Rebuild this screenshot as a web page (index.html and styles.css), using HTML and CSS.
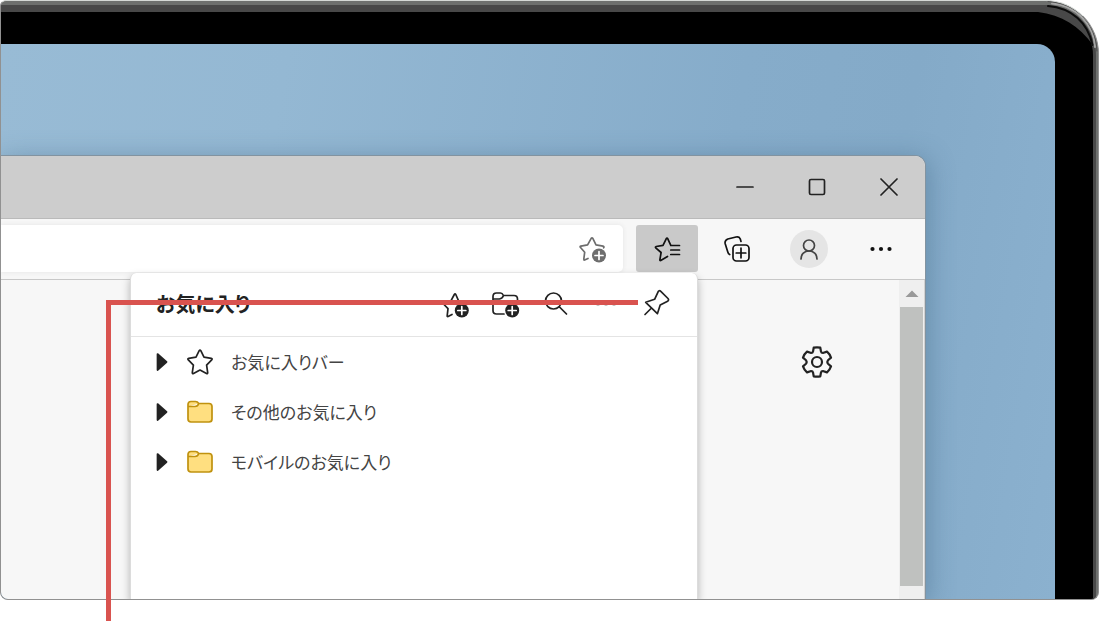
FILE: index.html
```html
<!DOCTYPE html>
<html lang="ja">
<head>
<meta charset="utf-8">
<meta name="viewport" content="width=device-width, initial-scale=1">
<title>お気に入り</title>
<link rel="stylesheet" href="styles.css">
</head>
<body>
<main class="stage">
  <div class="device">
    <div class="bezel">
      <div class="screen">
        <section class="window">
          <header class="titlebar">
            <button class="caption" aria-label="最小化"><svg width="18" height="18" viewBox="0 0 18 18"><path d="M1 9H17"/></svg></button>
            <button class="caption" aria-label="最大化"><svg width="18" height="18" viewBox="0 0 18 18"><rect x="1.500" y="1.500" width="15" height="15" rx="1.500"/></svg></button>
            <button class="caption" aria-label="閉じる"><svg width="18" height="18" viewBox="0 0 18 18"><path d="M1 1L17 17M17 1L1 17"/></svg></button>
          </header>
          <nav class="toolbar">
            <div class="address">
              <input class="url" type="text" aria-label="アドレス">
              <button class="add-page" aria-label="このページをお気に入りに追加">
                <svg width="28" height="28" viewBox="0 0 28 28"><path d="M9 23.500L5.600 25Q4.600 25.300 4.800 24.200L5.700 17.200L1.300 12.300Q.8 11.300 1.900 11.100L8.600 9.800L12.200 3.400Q13 2.500 13.800 3.400L17 9.800L24 11.100Q25.500 11.500 24.600 12.800"/><circle class="disc" cx="20" cy="20.500" r="7"/><path class="plus" d="M20 16.500V24.500M16 20.500H24"/></svg>
              </button>
            </div>
            <button class="tool tool-active" aria-label="お気に入り" aria-expanded="true">
              <svg width="28" height="28" viewBox="0 0 28 28"><path d="M14.500 21.500L7.700 25.500Q6.700 25.800 6.900 24.600L8.100 17.500L2.700 12.900Q2 11.800 3.200 11.500L10 10.300L13.200 3.800Q14 2.600 14.800 3.800L17.800 10.300M17.800 10.500H26.500M17.800 15H26.500M17.800 19.500H26.500"/></svg>
            </button>
            <button class="tool" aria-label="コレクション">
              <svg width="28" height="28" viewBox="0 0 28 28"><rect x="9" y="10" width="16" height="16" rx="3.500"/><path d="M17 13.200V22.800M12.200 18H21.800M5.700 19.500Q4.300 19 3.800 17L1.200 8.800Q.4 5.300 3.800 4L12 2Q15 1.200 16.200 3.800L17 6.500"/></svg>
            </button>
            <button class="tool" aria-label="プロファイル">
              <span class="avatar"><svg width="24" height="24" viewBox="0 0 24 24"><circle cx="12" cy="8.500" r="5.500"/><path d="M4 22C4 17 7.500 14 12 14S20 17 20 22"/></svg></span>
            </button>
            <button class="tool" aria-label="設定など">
              <svg class="dots" width="24" height="8" viewBox="0 0 24 8"><circle cx="4.500" cy="4" r="2.100"/><circle cx="13" cy="4" r="2.100"/><circle cx="21.500" cy="4" r="2.100"/></svg>
            </button>
          </nav>
          <div class="page">
            <button class="settings" aria-label="ページ設定">
              <svg width="32" height="32" viewBox="0 0 32 32"><circle cx="16" cy="16" r="5"/><path d="M12.700 1.700Q16 1 19.300 1.700L20 5.600Q20.300 7 21.800 7L26 5.600Q28.800 8 30 11.600L27 14.300Q25.700 16 27 17.700L30 20.400Q28.800 24 26 26.400L21.800 25Q20.300 25 20 26.400L19.300 30.300Q16 31 12.700 30.300L12 26.400Q11.700 25 10.200 25L6 26.400Q3.200 24 2 20.400L5 17.700Q6.300 16 5 14.300L2 11.600Q3.200 8 6 5.600L10.200 7Q11.700 7 12 5.600Z"/></svg>
            </button>
            <div class="scrollbar">
              <button class="scroll-up" aria-label="上へ"><svg width="14" height="8" viewBox="0 0 14 8"><path d="M7 .5L13.500 7H.5Z"/></svg></button>
              <div class="thumb"></div>
            </div>
          </div>

          <aside class="panel">
            <header class="panel-head">
              <h1 class="panel-title">お気に入り</h1>
              <button class="action" aria-label="お気に入りの追加">
                <svg width="32" height="32" viewBox="0 0 32 32"><path d="M11 26.500L7.100 28.500Q6 28.900 6.200 27.600L7 20.700L2.500 16Q1.800 14.800 3.200 14.500L9.800 13.200L13.300 6.500Q14 5.400 14.800 6.500L17.700 13.200L25 14.500"/><circle class="disc" cx="20.800" cy="22.500" r="7"/><path class="plus" d="M20.800 18.500V26.500M16.800 22.500H24.800"/></svg>
              </button>
              <button class="action" aria-label="フォルダーの追加">
                <svg width="32" height="32" viewBox="0 0 32 32"><path d="M13 26H5.500Q2 26 2 22.500V8.500Q2 5 5.500 5H9.500Q11.300 5 12.500 7.500H23Q26.500 7.500 26.500 11V16M2.500 11H8.500Q11.500 10.500 12.500 7.500"/><circle class="disc" cx="21.200" cy="22.500" r="7"/><path class="plus" d="M21.200 18.500V26.500M17.200 22.500H25.200"/></svg>
              </button>
              <button class="action" aria-label="検索">
                <svg width="32" height="32" viewBox="0 0 32 32"><circle cx="12.500" cy="13" r="8"/><path d="M18.500 19L25.500 26"/></svg>
              </button>
              <button class="action" aria-label="その他のオプション">
                <svg class="faint" width="32" height="32" viewBox="0 0 32 32"><circle cx="7" cy="16" r="2"/><circle cx="15" cy="16" r="2"/><circle cx="23" cy="16" r="2"/></svg>
              </button>
              <button class="action" aria-label="ピン留め">
                <svg width="32" height="32" viewBox="0 0 32 32"><path d="M4 26.500L10 20.500M17.200 3.600Q18.300 2 19.800 3.300L27 10.500Q28.300 12 26.600 13.200L19.200 17L16.400 25.700L4.700 14.300L13.600 11.300Z"/></svg>
              </button>
            </header>
            <ul class="tree">
              <li class="row">
                <button class="twisty" aria-label="展開"><svg width="12" height="18" viewBox="0 0 12 18"><path d="M1.500 1L10.500 9L1.500 17Z"/></svg></button>
                <svg class="star" width="28" height="28" viewBox="0 0 28 28"><path d="M13.200 2.700Q14 1.400 14.800 2.700L18 9.200L25.300 10.400Q26.800 10.700 25.700 11.900L20.600 17.200L21.700 24.600Q21.800 26 20.500 25.400L14 22L7.500 25.400Q6.200 26 6.300 24.600L7.400 17.200L2.300 11.900Q1.200 10.700 2.700 10.400L10 9.200Z"/></svg>
                <a class="label" href="#bar">お気に入りバー</a>
              </li>
              <li class="row">
                <button class="twisty" aria-label="展開"><svg width="12" height="18" viewBox="0 0 12 18"><path d="M1.500 1L10.500 9L1.500 17Z"/></svg></button>
                <svg class="folder" width="28" height="28" viewBox="0 0 28 28"><path d="M2 6.500Q2 3.500 5 3.500H9.500Q11.500 3.500 12.800 5.500H23Q26 5.500 26 8.500V21Q26 24 23 24H5Q2 24 2 21ZM2.500 8.500H9Q11.800 8.500 12.800 5.500"/></svg>
                <a class="label" href="#other">その他のお気に入り</a>
              </li>
              <li class="row">
                <button class="twisty" aria-label="展開"><svg width="12" height="18" viewBox="0 0 12 18"><path d="M1.500 1L10.500 9L1.500 17Z"/></svg></button>
                <svg class="folder" width="28" height="28" viewBox="0 0 28 28"><path d="M2 6.500Q2 3.500 5 3.500H9.500Q11.500 3.500 12.800 5.500H23Q26 5.500 26 8.500V21Q26 24 23 24H5Q2 24 2 21ZM2.500 8.500H9Q11.800 8.500 12.800 5.500"/></svg>
                <a class="label" href="#mobile">モバイルのお気に入り</a>
              </li>
            </ul>
          </aside>
        </section>
      </div>
    </div>
    <svg class="corner" width="60" height="60" viewBox="0 0 60 60" aria-hidden="true">
      <path class="corner-shade" d="M0 9L14 5C38 9 52 24 55 44C41 25 24 14 0 11Z"/>
      <path class="corner-light" d="M14 2.500C38 4 56 24 57 46"/>
      <path class="corner-line" d="M10 5C34 7 50 22 54.500 44"/>
      <path class="corner-edge" d="M10 .5C38 2 58 22 59 50"/>
    </svg>
  </div>
  <div class="callout"></div>
</main>
</body>
</html>
```

FILE: styles.css
```css
* { box-sizing: border-box; }

body {
  margin: 0;
  background: #fff;
  font-family: "Noto Sans CJK JP", sans-serif;
  color: #222;
}

button {
  display: flex;
  align-items: center;
  justify-content: center;
  padding: 0;
  border: 0;
  background: none;
  color: inherit;
}

svg {
  display: block;
  flex: none;
  fill: none;
  stroke: currentColor;
  stroke-width: 1.7;
  stroke-linecap: round;
  stroke-linejoin: round;
}

.stage {
  position: relative;
  display: flex;
  min-height: 100vh;
  padding-bottom: 21px;
}

/* Device frame */
.device {
  position: relative;
  flex: 1;
  display: flex;
  margin-right: 1px;
  padding: 4px 2px 0 0;
  overflow: hidden;
  border: 1px solid #919191;
  border-top-color: #d5d9d6;
  border-radius: 6px 54px 8px 8px;
  background: #6e706e;
}

.bezel {
  flex: 1;
  display: flex;
  padding: 32px 38px 0 0;
  border: solid #484848;
  border-width: 7px 3px 0 0;
  border-radius: 0 50px 0 0;
  background: #000;
}

.corner {
  position: absolute;
  top: 0;
  right: 0;
}

.corner-shade {
  fill: #484848;
  stroke: none;
}

.corner-light {
  stroke: #a5a5a5;
  stroke-width: 2;
}

.corner-line {
  stroke: #0c0c0c;
  stroke-width: 2;
}

.corner-edge {
  stroke: #4c4c4c;
  stroke-width: 1;
}

.screen {
  flex: 1;
  display: flex;
  padding: 112px 130px 0 0;
  overflow: hidden;
  border-radius: 0 18px 0 0;
  background: linear-gradient(100deg, #98bbd5 0%, #94b8d3 25%, #86acca 65%, #84aac8 80%, #8bb1cf 100%);
}

/* Browser window */
.window {
  position: relative;
  flex: 1;
  display: flex;
  flex-direction: column;
  border-radius: 0 10px 0 0;
  background: #f7f7f7;
  box-shadow: 0 0 0 1px #8293a0, 2px 4px 26px 2px rgba(55, 95, 125, 0.4);
}

.titlebar {
  display: flex;
  justify-content: flex-end;
  height: 63px;
  border-bottom: 1px solid #bababa;
  border-radius: 0 10px 0 0;
  background: #cdcdcd;
}

.caption { width: 72px; }

.toolbar {
  display: flex;
  gap: 9px;
  height: 61px;
  padding: 6px 14px 7px 0;
  border-bottom: 1px solid #c8c8c8;
}

.address {
  flex: 1;
  display: flex;
  margin-right: 4px;
  padding-right: 16px;
  border-radius: 0 5px 5px 0;
  background: #fff;
  box-shadow: 0 0 5px #e4e4e4;
}

.url {
  flex: 1;
  min-width: 0;
  border: 0;
  background: none;
  outline: 0;
}

.add-page { color: #6d6d6d; }

.tool {
  width: 62px;
  border-radius: 3px;
  color: #111;
}

.tool-active { background: #c9c9c9; }

.avatar {
  display: flex;
  align-items: center;
  justify-content: center;
  width: 38px;
  height: 38px;
  border-radius: 50%;
  background: #e5e5e5;
  color: #444;
}

.dots {
  fill: currentColor;
  stroke: none;
}

.disc {
  fill: currentColor;
  stroke: none;
}

.plus { stroke: #fff; }

.page {
  flex: 1;
  display: flex;
  justify-content: flex-end;
  align-items: flex-start;
}

.settings {
  margin: 66px 66px 0 0;
}

.settings svg { stroke-width: 2.2; }

.scrollbar {
  align-self: stretch;
  display: flex;
  flex-direction: column;
  width: 26px;
  padding: 0 1px 13px;
  border-right: 1px solid #d2d2d2;
  background: #efefef;
}

.scroll-up {
  height: 27px;
  color: #999;
}

.scroll-up svg {
  fill: currentColor;
  stroke: none;
}

.thumb {
  flex: 1;
  background: #bfc1bf;
}

/* Favorites panel */
.panel {
  position: absolute;
  top: 117px;
  right: 227px;
  bottom: 0;
  width: 568px;
  border: solid #dcdcdc;
  border-width: 0 1px;
  border-radius: 6px 6px 0 0;
  background: #fff;
  box-shadow: 0 4px 9px rgba(0, 0, 0, 0.28);
}

.panel-head {
  display: flex;
  align-items: center;
  gap: 18px;
  height: 64px;
  padding: 0 24px 2px 25px;
  border-bottom: 1px solid #e4e4e4;
}

.panel-title {
  flex: 1;
  margin: 0;
  font-size: 20px;
  font-weight: 700;
  line-height: 28px;
  font-feature-settings: "palt";
}

.action {
  width: 32px;
  height: 32px;
}

.faint {
  fill: #bbb;
  stroke: none;
}

.tree {
  margin: 0;
  padding: 0;
  list-style: none;
}

.row {
  display: flex;
  align-items: center;
  height: 50px;
  padding-left: 25px;
}

.twisty svg { fill: currentColor; }

.star, .folder { margin: 0 17px 0 18px; }

.folder {
  fill: #ffdf80;
  stroke: #c0920f;
}

.label {
  color: #444;
  font-size: 17px;
  line-height: 26px;
  text-decoration: none;
  font-feature-settings: "palt";
}

/* Callout line that leads to the pin button */
.callout {
  position: absolute;
  top: 300px;
  right: 462px;
  bottom: 0;
  width: 532px;
  border: solid #d9534f;
  border-width: 5px 0 0 5px;
  pointer-events: none;
}
```
